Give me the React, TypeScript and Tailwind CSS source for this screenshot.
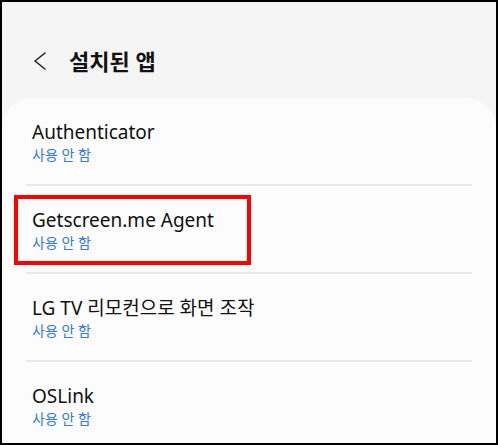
const apps = ['Authenticator', 'Getscreen.me Agent', 'LG TV 리모컨으로 화면 조작', 'OSLink'];

function AppRow({ name, last, marked }: { name: string; last: boolean; marked: boolean }) {
  return (
    <div className="relative">
      <div className="flex flex-col px-[30px] pt-[21px] pb-[19px]">
        <p className="text-[19px] leading-[26px] text-[#111111]">{name}</p>
        <p className="text-[14px] leading-[20px] text-[#2f7dd8]">사용 안 함</p>
      </div>
      {!last && <div className="mx-[24px] h-[2px] bg-[#e8e8e8]" />}
      {marked && (
        <div className="pointer-events-none absolute top-[9px] left-[12px] h-[70px] w-[237px] border-4 border-[#ff0000]" />
      )}
    </div>
  );
}

export default function App() {
  return (
    <div
      className="flex h-[445px] w-[498px] flex-col overflow-hidden border-2 border-black bg-[#f5f5f5]"
      style={{ fontFamily: '"Noto Sans", "Noto Sans CJK KR", sans-serif' }}
    >
      <header className="flex h-[96px] shrink-0 items-center gap-[22px] pt-[22px] pl-[29px]">
        <svg width="16" height="20" viewBox="0 0 16 20" fill="none" stroke="#222222" strokeWidth="1.6" strokeLinecap="round" strokeLinejoin="round">
          <path d="M14 2 L4 10 L14 18" />
        </svg>
        <h1 className="text-[22px] font-bold leading-none text-[#111111]">설치된 앱</h1>
      </header>

      <div className="flex-1 rounded-t-[30px] bg-[#fcfcfc]">
        {apps.map((name, i) => (
          <AppRow key={name} name={name} last={i === apps.length - 1} marked={i === 1} />
        ))}
      </div>
    </div>
  );
}
